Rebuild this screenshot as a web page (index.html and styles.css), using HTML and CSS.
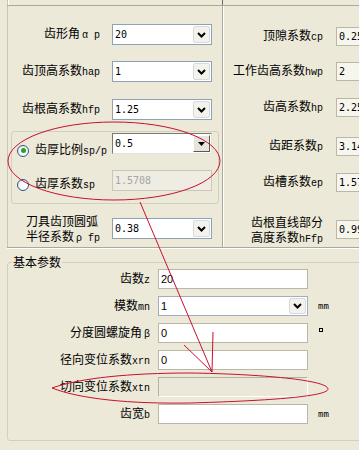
FILE: index.html
```html
<!DOCTYPE html>
<html lang="zh-CN">
<head>
<meta charset="utf-8">
<title>齿轮参数</title>
<link rel="stylesheet" href="styles.css">
</head>
<body>
<div class="page">
  <div class="top-strip"><div class="ts-a"></div><div class="ts-b"></div></div>

  <div class="upper">
    <div class="col-left">
      <div class="row r1">
        <span class="lbl">齿形角<span class="en sym">α p</span></span>
        <div class="combo"><span class="val num">20</span><span class="btn"><svg width="9" height="6" viewBox="0 0 9 6"><path d="M1 1 L4.5 4.5 L8 1" fill="none" stroke="#000" stroke-width="2"/></svg></span></div>
      </div>
      <div class="row r2">
        <span class="lbl">齿顶高系数<span class="en">hap</span></span>
        <div class="combo"><span class="val num">1</span><span class="btn"><svg width="9" height="6" viewBox="0 0 9 6"><path d="M1 1 L4.5 4.5 L8 1" fill="none" stroke="#000" stroke-width="2"/></svg></span></div>
      </div>
      <div class="row r3">
        <span class="lbl">齿根高系数<span class="en">hfp</span></span>
        <div class="combo"><span class="val num">1.25</span><span class="btn"><svg width="9" height="6" viewBox="0 0 9 6"><path d="M1 1 L4.5 4.5 L8 1" fill="none" stroke="#000" stroke-width="2"/></svg></span></div>
      </div>

      <div class="radio-group">
        <div class="rrow rr1">
          <span class="rlab"><span class="radio on"></span><span>齿厚比例<span class="en">sp/p</span></span></span>
          <div class="combo classic"><span class="val num">0.5</span><span class="btn2"><svg width="7" height="4" viewBox="0 0 7 4"><path d="M0 0 H7 L3.5 4 Z" fill="#000"/></svg></span></div>
        </div>
        <div class="rrow rr2">
          <span class="rlab"><span class="radio"></span><span>齿厚系数<span class="en">sp</span></span></span>
          <div class="edit disabled"><span class="val num">1.5708</span></div>
        </div>
      </div>

      <div class="row r4">
        <span class="lbl two">刀具齿顶圆弧<br>半径系数<span class="en sym">ρ fp</span></span>
        <div class="combo"><span class="val num">0.38</span><span class="btn"><svg width="9" height="6" viewBox="0 0 9 6"><path d="M1 1 L4.5 4.5 L8 1" fill="none" stroke="#000" stroke-width="2"/></svg></span></div>
      </div>
    </div>

    <div class="divider"></div>

    <div class="col-right">
      <div class="rrow-r q1">
        <span class="lbl">顶隙系数<span class="en">cp</span></span>
        <div class="edit ro"><span class="val num">0.25</span></div>
      </div>
      <div class="rrow-r q2">
        <span class="lbl">工作齿高系数<span class="en">hwp</span></span>
        <div class="edit ro"><span class="val num">2</span></div>
      </div>
      <div class="rrow-r q3">
        <span class="lbl">齿高系数<span class="en">hp</span></span>
        <div class="edit ro"><span class="val num">2.25</span></div>
      </div>
      <div class="rrow-r q4">
        <span class="lbl">齿距系数<span class="en">p</span></span>
        <div class="edit ro"><span class="val num">3.14</span></div>
      </div>
      <div class="rrow-r q5">
        <span class="lbl">齿槽系数<span class="en">ep</span></span>
        <div class="edit ro"><span class="val num">1.57</span></div>
      </div>
      <div class="rrow-r q6">
        <span class="lbl two">齿根直线部分<br>高度系数<span class="en">hFfp</span></span>
        <div class="edit ro"><span class="val num">0.99</span></div>
      </div>
    </div>
  </div>

  <div class="group">
    <span class="legend">基本参数</span>
    <div class="grow">
      <span class="lbl">齿数<span class="en">z</span></span>
      <div class="edit white"><span class="val sans">20</span></div>
    </div>
    <div class="grow">
      <span class="lbl">模数<span class="en">mn</span></span>
      <div class="combo blue"><span class="val sans">1</span><span class="btn"><svg width="9" height="6" viewBox="0 0 9 6"><path d="M1 1 L4.5 4.5 L8 1" fill="none" stroke="#000" stroke-width="2"/></svg></span></div>
      <span class="unit">mm</span>
    </div>
    <div class="grow">
      <span class="lbl">分度圆螺旋角<span class="en sym">β</span></span>
      <div class="edit white"><span class="val sans">0</span></div>
      <span class="deg"></span>
    </div>
    <div class="grow">
      <span class="lbl">径向变位系数<span class="en">xrn</span></span>
      <div class="edit white"><span class="val sans">0</span></div>
    </div>
    <div class="grow">
      <span class="lbl">切向变位系数<span class="en">xtn</span></span>
      <div class="edit sunken"><span class="val sans"></span></div>
    </div>
    <div class="grow">
      <span class="lbl">齿宽<span class="en">b</span></span>
      <div class="edit white"><span class="val sans"></span></div>
      <span class="unit">mm</span>
    </div>
  </div>

  <svg class="annot" width="359" height="450" viewBox="0 0 359 450">
    <ellipse cx="114" cy="161" rx="106" ry="39" fill="none" stroke="#C8102E" stroke-width="1"/>
    <path d="M140 202 L212 372 M213 332 L212 372 M184 345 L212 372" fill="none" stroke="#C8102E" stroke-width="1"/>
    <path d="M52 388 C 80 378 130 373 190 373 C 260 374 328 380 328 389 C 328 397 260 401 190 403 C 130 404 80 399 52 388 Z" fill="none" stroke="#C8102E" stroke-width="1"/>
  </svg>
</div>
</body>
</html>
```

FILE: styles.css
```css
* { box-sizing: border-box; margin: 0; padding: 0; }
html, body { width: 359px; height: 450px; overflow: hidden; }
body {
  background: #ECE9D8;
  font-family: "Noto Sans CJK SC", "Noto Sans", sans-serif;
  font-size: 12px;
  line-height: 14px;
  color: #000;
}
.page { position: relative; width: 359px; height: 450px; overflow: hidden; }

/* top strip */
.top-strip { display: flex; height: 6px; margin-left: 7px; border-bottom: 1px solid #ACA899; }
.ts-a { width: 216px; border-left: 1px solid #C8C5B6; border-right: 1px solid #716F64; box-shadow: inset 1px 0 0 #fff; }
.ts-b { flex: 1; }

/* upper section */
.upper {
  display: grid;
  grid-template-columns: 215px 2px 1fr;
  margin-left: 7px;
  height: 242px;
  border-bottom: 1px solid #ACA899;
  box-shadow: 0 1px 0 #fff;
}
.col-left { border-left: 1px solid #C8C5B6; padding-top: 18px; }
.divider { border-left: 1px solid #ACA899; border-right: 1px solid #fff; }
.col-right { padding-top: 21px; overflow: hidden; }

.en { font-family: "Liberation Mono", "DejaVu Sans Mono", monospace; font-size: 10px; }
.sym { margin-left: 2px; }
.num { font-family: "DejaVu Sans Mono", monospace; font-size: 10px; }
.sans { font-family: "Liberation Sans", sans-serif; font-size: 11px; }

.row {
  display: grid;
  grid-template-columns: 92px 100px;
  column-gap: 12px;
  align-items: center;
  height: 21px;
  white-space: nowrap;
}
.lbl { justify-self: end; white-space: nowrap; }
.lbl.two { text-align: left; line-height: 15px; }
.r2 { margin-top: 16px; }
.r3 { margin-top: 17px; }
.r4 { margin-top: 9px; height: 29px; align-items: start; }
.r4 .combo { margin-top: 5px; }

/* combo boxes */
.combo {
  display: flex;
  align-items: center;
  height: 21px;
  border: 1px solid #8DA2B5;
  background: #fff;
  padding: 1px;
}
.combo .val { flex: 1; padding-left: 1px; }
.btn {
  display: flex;
  align-items: center;
  justify-content: center;
  width: 17px;
  height: 17px;
  background: #F3F2EC;
  border: 1px solid #D6D9DF;
  border-radius: 2px;
}
.combo.classic { border-color: #7C7A70 #E4E2D8 #E4E2D8 #7C7A70; }
.btn2 {
  display: flex;
  align-items: center;
  justify-content: center;
  width: 17px;
  height: 17px;
  background: #E6E4DC;
  border: 1px solid;
  border-color: #fff #5A5850 #5A5850 #fff;
}
.combo.blue { height: 20px; border-color: #A3ADBC; }
.combo.blue .btn { height: 16px; }

/* edits */
.edit { display: flex; align-items: center; height: 21px; padding-left: 2px; border: 1px solid #C3C0B2; overflow: hidden; }
.edit.disabled { background: #EEECE3; border-color: #CAC7BA; color: #A5A5A5; }
.edit.ro { height: 19px; width: 70px; background: #F6F5EE; border-color: #BAB7A8; }
.edit.white { height: 20px; background: #fff; border-color: #BAB7A9; }
.edit.sunken { height: 20px; background: #EBE8DA; border-color: #B4B1A3 #fff #fff #B4B1A3; }

/* radio group */
.radio-group {
  margin: 11px 0 0 3px;
  width: 208px;
  border: 1px solid #D0D0BF;
  border-radius: 3px;
  padding: 1px 6px 12px 0;
}
.rrow { display: grid; grid-template-columns: 100px 100px; align-items: start; height: 21px; }
.rr2 { margin-top: 16px; }
.rlab { display: flex; align-items: center; gap: 6px; padding-left: 5px; white-space: nowrap; }
.rr1 .rlab { padding-top: 9px; }
.rr2 .rlab { padding-top: 6px; }
.radio {
  display: flex;
  align-items: center;
  justify-content: center;
  width: 12px;
  height: 12px;
  border: 1px solid #2B5A8A;
  border-radius: 50%;
  background: radial-gradient(circle at 60% 60%, #fff 30%, #DCDBD2 100%);
  flex: none;
}
.radio.on::after {
  content: "";
  width: 5px;
  height: 5px;
  border-radius: 50%;
  background: #2AA02A;
}

/* right rows */
.rrow-r {
  display: grid;
  grid-template-columns: 99px 70px;
  column-gap: 13px;
  align-items: center;
  height: 19px;
}
.q2 { margin-top: 16px; }
.q3 { margin-top: 17px; }
.q4 { margin-top: 20px; }
.q5 { margin-top: 17px; }
.q6 { margin-top: 22px; height: 30px; align-items: start; }
.q6 .edit { margin-top: 6px; }

/* lower group */
.group {
  margin: 14px 0 0 7px;
  width: 420px;
  height: 179px;
  border: 1px solid #D0D0BF;
  border-radius: 3px;
}
.legend {
  display: block;
  width: max-content;
  margin: -8px 0 0 4px;
  padding: 0 1px;
  background: #ECE9D8;
  line-height: 14px;
}
.grow {
  display: grid;
  grid-template-columns: 142px 150px auto;
  column-gap: 8px;
  align-items: center;
  height: 20px;
}
.grow + .grow { margin-top: 7px; }
.unit {
  margin-left: 2px;
  font-family: "DejaVu Sans Mono", monospace;
  font-size: 9px;
  line-height: 10px;
}
.deg {
  align-self: start;
  margin: 5px 0 0 3px;
  width: 4px;
  height: 4px;
  border: 1px solid #000;
}

.annot { position: absolute; left: 0; top: 0; pointer-events: none; }
```
